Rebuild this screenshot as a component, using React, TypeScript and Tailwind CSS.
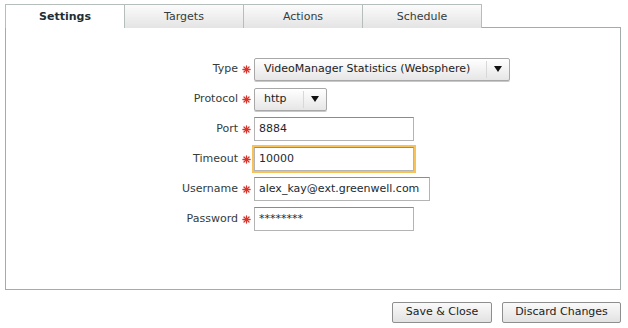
import React from "react";

const font = { fontFamily: '"DejaVu Sans", Verdana, sans-serif' };

function Req() {
  return (
    <svg width="9" height="9" viewBox="0 0 10 10" className="ml-[4px] mr-[3px] shrink-0">
      <g stroke="#d9342b" strokeWidth="1.4" strokeLinecap="round">
        <line x1="5" y1="1" x2="5" y2="9" />
        <line x1="1" y1="5" x2="9" y2="5" />
        <line x1="2.2" y1="2.2" x2="7.8" y2="7.8" />
        <line x1="7.8" y1="2.2" x2="2.2" y2="7.8" />
      </g>
    </svg>
  );
}

function Row({ label, children }: { label: string; children: React.ReactNode }) {
  return (
    <div className="flex items-center h-[30px]">
      <div className="w-[232px] text-right text-[#333c40]">{label}</div>
      <Req />
      {children}
    </div>
  );
}

function Select({ value, width }: { value: string; width: string }) {
  return (
    <div
      className={`${width} h-[23px] flex items-center border border-[#a8a8a8] rounded-[2px] bg-gradient-to-b from-white to-[#e6e6e6] shadow-[0_1px_0_#c8c8c8]`}
    >
      <span className="flex-1 pl-[9px] text-[#222]">{value}</span>
      <span className="w-px h-[17px] bg-[#d8d8d8]" />
      <span className="w-[22px] flex justify-center">
        <svg width="8" height="6" viewBox="0 0 8 6">
          <path d="M0 0h8L4 6z" fill="#111" />
        </svg>
      </span>
    </div>
  );
}

function Input({ value, width, focus }: { value: string; width: string; focus?: boolean }) {
  return (
    <div
      className={`${width} h-[24px] flex items-center pl-[4px] bg-white border border-[#b4b4b4] border-t-[#8c8c8c] ${
        focus ? "outline-2 outline-[#f7c25a]" : ""
      } text-[#1c2a30]`}
    >
      {value}
    </div>
  );
}

export default function App() {
  const tabs = ["Settings", "Targets", "Actions", "Schedule"];
  return (
    <div className="w-[628px] h-[328px] bg-white text-[11px]" style={font}>
      <div className="flex pl-[5px] pt-[4px] relative z-10">
        {tabs.map((t, i) => (
          <div
            key={t}
            className={`w-[120px] ${i > 0 ? "-ml-px" : ""} h-[24px] flex items-center justify-center pt-[1px] border border-b-0 border-[#b6bebc] ${
              i === 0
                ? "bg-white font-bold text-[#1e2e34]"
                : "bg-gradient-to-b from-[#fbfbfb] to-[#e4e4e4] text-[#333c40] border-b border-b-[#b6bebc]"
            }`}
          >
            {t}
          </div>
        ))}
      </div>
      <div className="ml-[5px] -mt-px w-[616px] h-[263px] border border-[#a3acaa] pt-[26px]">
        <Row label="Type">
          <Select value="VideoManager Statistics (Websphere)" width="w-[256px]" />
        </Row>
        <Row label="Protocol">
          <Select value="http" width="w-[73px]" />
        </Row>
        <Row label="Port">
          <Input value="8884" width="w-[160px]" />
        </Row>
        <Row label="Timeout">
          <Input value="10000" width="w-[160px]" focus />
        </Row>
        <Row label="Username">
          <Input value="alex_kay@ext.greenwell.com" width="w-[176px]" />
        </Row>
        <Row label="Password">
          <Input value="********" width="w-[160px]" />
        </Row>
      </div>
      <div className="flex justify-end gap-[10px] w-[621px] mt-[12px]">
        <button className="w-[100px] h-[21px] border border-[#8e8e8e] rounded-[2px] bg-gradient-to-b from-[#fafafa] to-[#e2e2e2] text-[#222]">
          Save &amp; Close
        </button>
        <button className="w-[119px] h-[21px] border border-[#8e8e8e] rounded-[2px] bg-gradient-to-b from-[#fafafa] to-[#e2e2e2] text-[#222]">
          Discard Changes
        </button>
      </div>
    </div>
  );
}
